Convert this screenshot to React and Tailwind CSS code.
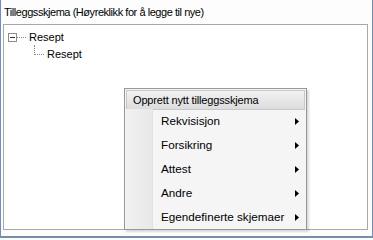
import React from 'react';

const MenuItem = ({ label }) => (
  <div className="flex items-center h-6 whitespace-nowrap">
    <div className="w-[35px]" />
    <span className="flex-1">{label}</span>
    <svg width="4" height="7" viewBox="0 0 4 7" className="mr-[6px]">
      <path d="M0 0 L4 3.5 L0 7 Z" fill="#000" />
    </svg>
  </div>
);

const App = () => {
  const items = ['Rekvisisjon', 'Forsikring', 'Attest', 'Andre', 'Egendefinerte skjemaer'];

  return (
    <div
      className="w-[373px] h-[240px] bg-white text-[11px] text-[#000] overflow-hidden"
      style={{ fontFamily: '"Liberation Sans", Arial, sans-serif' }}
    >
      <div className="h-[238px] border-l border-r border-b-2 border-[#6f8fb8] bg-[#fdfdfd] flex flex-col">
        <div className="pl-[3px] h-[24px] pt-[1px] flex items-center tracking-[-0.45px]">
          Tilleggsskjema (Høyreklikk for å legge til nye)
        </div>
        <div className="flex-1 flex pr-[2px] pb-[6px]">
          <div className="flex-1 mx-[2px] border border-[#a8a8a8] bg-white relative">
            <div className="pt-[4px] pl-[4px]">
              <div className="flex items-center h-[16px]">
                <span className="w-[9px] h-[9px] border border-[#8c8c8c] flex items-center justify-center">
                  <span className="w-[5px] h-px bg-[#333]" />
                </span>
                <span className="w-[9px] border-t border-dotted border-[#888]" />
                <span className="pl-[3px]">Resept</span>
              </div>
              <div className="flex items-start h-[18px]">
                <span className="ml-[26px] w-[10px] h-[10px] border-l border-b border-dotted border-[#888]" />
                <span className="pl-[3px] leading-[18px]">Resept</span>
              </div>
            </div>

            <div className="absolute left-[120px] top-[63px] w-[183px] h-[142px] border border-[#979797] bg-[#f5f5f5] p-[1px] shadow-[2px_2px_2px_rgba(0,0,0,0.15)]">
              <div className="h-[20px] flex items-center pl-[6px] border border-[#c8c8c8] bg-gradient-to-b from-[#f2f2f2] to-[#dcdcdc] tracking-[-0.15px]">
                Opprett nytt tilleggsskjema
              </div>
              <div className="relative">
                <div className="absolute left-0 top-0 bottom-0 w-[27px] bg-gradient-to-r from-[#f1f1f1] to-[#e8e8e8] border-r border-[#e2e2e2]" />
                <div className="relative flex flex-col -mt-[1px] text-[11.7px]">
                  {items.map((it) => (
                    <MenuItem key={it} label={it} />
                  ))}
                </div>
              </div>
            </div>
          </div>
        </div>
      </div>
    </div>
  );
};

export default App;
